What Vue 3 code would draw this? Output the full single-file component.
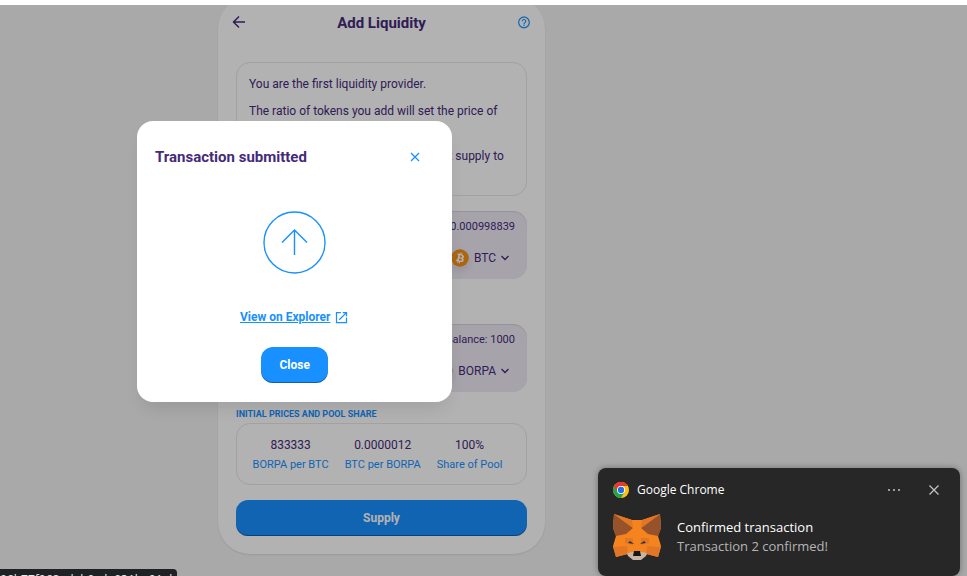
<script setup>
import { ref } from 'vue'

const modalOpen = ref(true)
const toastOpen = ref(true)

const tokens = [
  { symbol: 'BTC', balance: '0.000998839', amount: '0.0009' },
  { symbol: 'BORPA', balance: '1000', amount: '750' }
]

const stats = [
  { value: '833333', label: 'BORPA per BTC' },
  { value: '0.0000012', label: 'BTC per BORPA' },
  { value: '100%', label: 'Share of Pool' }
]
</script>

<template>
  <div class="page">
    <main class="card">
      <header class="card-head">
        <button class="icon-btn back" aria-label="Back">
          <svg width="14" height="14" viewBox="0 0 14 14"><path d="M13 6H2M7 0.5 1.500 6 7 11.500" fill="none" stroke="currentColor" stroke-width="1.500" /></svg>
        </button>
        <h1>Add Liquidity</h1>
        <button class="icon-btn help" aria-label="Help">
          <svg width="14" height="14" viewBox="0 0 24 24" fill="currentColor"><path d="M11 17h2v-2h-2v2zm1-16C6.480 1 2 5.480 2 11s4.480 10 10 10 10-4.480 10-10S17.520 1 12 1zm0 18c-4.410 0-8-3.590-8-8s3.590-8 8-8 8 3.590 8 8-3.590 8-8 8zm0-14c-2.210 0-4 1.790-4 4h2c0-1.100.9-2 2-2s2 .9 2 2c0 2-3 1.750-3 5h2c0-2.250 3-2.500 3-5 0-2.210-1.790-4-4-4z" /></svg>
        </button>
      </header>

      <section class="notice outlined">
        <p>You are the first liquidity provider.</p>
        <p>The ratio of tokens you add will set the price of this pool.</p>
        <p>Once you are happy with the rate, click supply to review.</p>
      </section>

      <template v-for="(token, i) in tokens" :key="token.symbol">
        <div v-if="i" class="plus">+</div>
        <section class="token">
          <div class="token-row">
            <label :for="'amount-' + token.symbol">Input</label>
            <span class="balance">Balance: {{ token.balance }}</span>
          </div>
          <div class="token-row main-row">
            <input :id="'amount-' + token.symbol" :value="token.amount" inputmode="decimal" />
            <button class="picker">
              <svg v-if="token.symbol === 'BTC'" class="coin" width="18" height="18" viewBox="0 0 32 32">
                <circle cx="16" cy="16" r="16" fill="#f7931a" />
                <path fill="#fff" fill-rule="evenodd" d="M23.2 14c.3-2.100-1.300-3.200-3.500-4l.7-2.800-1.700-.4-.7 2.700-1.400-.3.7-2.700-1.700-.5-.7 2.900-3.500-.9-.4 1.800s1.200.3 1.200.3c.7.2.8.6.8 1l-1.900 7.800c-.1.2-.3.5-.8.400l-1.200-.3-.9 2 3.300.8-.7 2.800 1.700.4.7-2.800 1.400.4-.7 2.800 1.700.4.7-2.800c2.900.5 5.100.3 6-2.300.8-2.100 0-3.300-1.500-4.100 1.100-.3 1.900-1 2.400-2.600zM19.300 19.500c-.5 2.100-4.100 1-5.200.7l.9-3.800c1.200.3 4.900.9 4.300 3.100zm.5-5.500c-.5 1.900-3.500.9-4.400.7l.8-3.400c1 .2 4.100.7 3.600 2.700z" />
              </svg>
              <svg v-else class="coin" width="18" height="18" viewBox="0 0 18 18"><circle cx="9" cy="9" r="9" fill="#bdb6c8" /></svg>
              <span>{{ token.symbol }}</span>
              <svg width="8" height="6" viewBox="0 0 8 6"><path d="m0.500 1 3.500 3.500L7.500 1" fill="none" stroke="currentColor" stroke-width="1.300" /></svg>
            </button>
          </div>
        </section>
      </template>

      <h2>INITIAL PRICES AND POOL SHARE</h2>
      <dl class="stats outlined">
        <div v-for="stat in stats" :key="stat.label">
          <dd>{{ stat.value }}</dd>
          <dt>{{ stat.label }}</dt>
        </div>
      </dl>
      <button class="primary supply">Supply</button>
    </main>

    <div v-if="modalOpen" class="overlay">
      <div class="modal" role="dialog" aria-labelledby="modal-title">
        <header class="modal-head">
          <h2 id="modal-title">Transaction submitted</h2>
          <button class="icon-btn" aria-label="Dismiss" @click="modalOpen = false">
            <svg width="10" height="10" viewBox="0 0 10 10"><path d="m1 1 8 8M9 1 1 9" stroke="currentColor" stroke-width="1.300" /></svg>
          </button>
        </header>
        <svg class="sent" width="64" height="64" viewBox="0 0 64 64" fill="none" stroke="#1890ff">
          <circle cx="31.500" cy="32.500" r="30.500" stroke-width="1.400" />
          <path d="M31.500 45V20M19 32.500 31.500 20 44 32.500" stroke-width="1.400" />
        </svg>
        <a class="explorer" href="#">
          <span>View on Explorer</span>
          <svg width="15" height="15" viewBox="0 0 24 24" fill="currentColor"><path d="M19 19H5V5h6V3H3v18h18v-9h-2v7zM14 3v2h3.590l-9.830 9.830 1.410 1.410L19 6.410V10h2V3h-7z" /></svg>
        </a>
        <button class="primary" @click="modalOpen = false">Close</button>
      </div>
    </div>

    <aside v-if="toastOpen" class="toast">
      <header class="toast-head">
        <svg width="16" height="16" viewBox="0 0 48 48">
          <circle cx="24" cy="24" r="24" fill="#fbc116" />
          <path d="M24 24 34.400 30 24 48A24 24 0 0 1 3.200 12z" fill="#26a248" />
          <path d="M3.200 12A24 24 0 0 1 44.800 12H24v12L13.600 30z" fill="#e53a2e" />
          <circle cx="24" cy="24" r="12" fill="#fff" />
          <circle cx="24" cy="24" r="9.500" fill="#1f6fe8" />
        </svg>
        <span class="app-name">Google Chrome</span>
        <button class="icon-btn" aria-label="More">
          <svg width="12" height="12" viewBox="0 0 12 12" fill="currentColor"><circle cx="1" cy="6" r="1" /><circle cx="6" cy="6" r="1" /><circle cx="11" cy="6" r="1" /></svg>
        </button>
        <button class="icon-btn" aria-label="Close notification" @click="toastOpen = false">
          <svg width="10" height="10" viewBox="0 0 10 10"><path d="m0.500 0.500 9 9M9.500 0.500l-9 9" stroke="currentColor" stroke-width="1.200" /></svg>
        </button>
      </header>
      <div class="toast-body">
        <svg width="48" height="46" viewBox="0 0 48 46">
          <path d="M1 0 19 6H29L47 0 48 14 45 22 48 32 45 43 34 40 28 45H20L14 40 3 43 0 32 3 22 0 14z" fill="#f5841f" />
          <path d="M1 0 20 14 13 20 3 22 0 14zM47 0 28 14l7 6 10 2 3-8z" fill="#96522a" />
          <path d="M1 0 19 6 20 14zM47 0 29 6 28 14z" fill="#e27625" />
          <path d="M0 33 14 32 15 40 3 43zM48 33 34 32 33 40 45 43zM12 24h8v7l-8-2zM36 24h-8v7l8-2z" fill="#e27625" />
          <path d="m15 29 2-2 4 3zM33 29l-2-2-4 3z" fill="#233447" />
          <path d="M14 39 20 38H28L34 39 33 42 28 46H20L15 42z" fill="#c8b4a4" />
          <path d="M21 37h6l1 5h-8z" fill="#161616" />
        </svg>
        <div>
          <strong>Confirmed transaction</strong>
          <p>Transaction 2 confirmed!</p>
        </div>
      </div>
    </aside>

    <div class="status">96b77f068edab0cde031ba01ab</div>
  </div>
</template>

<style>
body { background: #fff; }
</style>

<style scoped>
.page {
  position: relative;
  box-sizing: border-box;
  height: 100vh;
  border-top: 5px solid #fff;
  background: #f3f3f3;
  overflow: hidden;
  color: #452a7a;
  font: 12px/18px Roboto, "Liberation Sans", sans-serif;
}
h1, h2, p, dl, dd { margin: 0; }
button { font: inherit; color: inherit; cursor: pointer; }
.icon-btn { display: flex; padding: 0; border: 0; background: none; }
.card {
  box-sizing: border-box;
  width: 33%;
  min-width: 327px;
  margin: -8px 0 0 218px;
  padding: 0 18px 18px;
  border-radius: 32px;
  background: #fff;
  box-shadow: 0 1px 2px rgba(25, 19, 38, .1);
}
.card-head {
  display: flex;
  justify-content: space-between;
  align-items: center;
  height: 52px;
  margin-bottom: 13px;
}
.card-head .back { margin-left: -4px; }
.card-head .help { margin-right: -4px; color: #1890ff; }
h1 { font-size: 15px; font-weight: 700; }
.outlined { border: 1px solid #e7e5ea; border-radius: 14px; }
.notice { padding: 12px; margin-bottom: 15px; }
.notice p + p { margin-top: 9px; }
.token {
  box-sizing: border-box;
  height: 68px;
  padding: 7px 12px;
  border-radius: 14px;
  background: #eeeaf4;
  box-shadow: inset 0 1px 1px rgba(74, 74, 104, .15);
}
.token-row { display: flex; justify-content: space-between; align-items: center; }
.main-row { margin-top: 12px; }
.balance { font-size: 11px; }
.token input { width: 40%; border: 0; background: none; color: inherit; font: inherit; }
.picker {
  display: flex;
  align-items: center;
  gap: 5px;
  padding: 0 6px 0 0;
  border: 0;
  background: none;
}
.coin { border-radius: 50%; box-shadow: 0 4px 8px rgba(0, 0, 0, .1); }
.plus { height: 45px; line-height: 45px; text-align: center; }
.card > h2 { margin-top: 13px; color: #1890ff; font-size: 9px; font-weight: 700; }
.stats {
  display: grid;
  grid-template-columns: repeat(3, auto);
  justify-content: center;
  gap: 16px;
  padding: 12px 8px 10px 0;
  margin-bottom: 15px;
  text-align: center;
}
.stats div { display: flex; flex-direction: column; gap: 2px; }
.stats dt { color: #1890ff; font-size: 11px; }
.primary {
  height: 36px;
  padding: 0 18px;
  border: 0;
  border-radius: 12px;
  background: #1890ff;
  box-shadow: inset 0 -1px 0 rgba(14, 14, 44, .4);
  color: #fff;
  font-weight: 700;
}
.supply { width: 100%; }
.overlay {
  position: absolute;
  inset: 0;
  padding: 116px 0 0 137px;
  background: rgba(0, 0, 0, .3);
}
.modal {
  box-sizing: border-box;
  display: flex;
  flex-direction: column;
  align-items: center;
  width: 38%;
  max-width: 420px;
  min-width: 315px;
  padding: 18px 18px 19px;
  border-radius: 16px;
  background: #fff;
  box-shadow: 0 10px 18px -6px rgba(14, 14, 44, .12);
}
.modal-head {
  display: flex;
  justify-content: space-between;
  align-items: center;
  align-self: stretch;
  height: 36px;
  padding-right: 14px;
}
.modal-head h2 { font-size: 15px; font-weight: 700; }
.modal-head .icon-btn { color: #1890ff; }
.sent { margin: 35px 0 34px; }
.explorer {
  display: flex;
  align-items: center;
  gap: 4px;
  margin-bottom: 21px;
  color: #1890ff;
  font-weight: 700;
}
.toast {
  position: absolute;
  right: 7px;
  bottom: 0;
  box-sizing: border-box;
  width: 362px;
  padding: 14px 21px 16px 15px;
  border-radius: 8px;
  background: #272727;
  box-shadow: 0 0 6px rgba(0, 0, 0, .35);
  color: #fff;
  font: 12px/16px "Open Sans", "Noto Sans", sans-serif;
}
.toast-head { display: flex; align-items: center; gap: 8px; color: #c5c5c5; }
.app-name { flex: 1; color: #fff; }
.toast-head .icon-btn + .icon-btn { margin-left: 21px; }
.toast-body { display: flex; gap: 16px; align-items: center; margin-top: 16px; font-size: 13px; line-height: 19px; }
.toast-body strong { font-weight: 400; }
.toast-body p { color: #b5b5b5; }
.status {
  position: absolute;
  left: 0;
  bottom: 0;
  box-sizing: border-box;
  width: 177px;
  height: 7px;
  padding-top: 1px;
  overflow: hidden;
  border-radius: 0 4px 0 0;
  background: #202124;
  color: #e8eaed;
  font: 12px/20px "Open Sans", sans-serif;
}
</style>
